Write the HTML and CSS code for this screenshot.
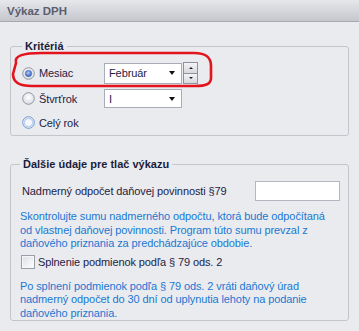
FILE: index.html
```html
<!DOCTYPE html>
<html>
<head>
<meta charset="utf-8">
<link rel="stylesheet" href="styles.css">
</head>
<body>
<div class="titlebar">Výkaz DPH</div>
<div class="content">
  <fieldset class="group g1">
    <legend>Kritériá</legend>
    <div class="row r1">
      <label class="radio"><svg width="13" height="13" viewBox="0 0 13 13"><defs><radialGradient id="rb" cx="50%" cy="40%" r="60%"><stop offset="0" stop-color="#ffffff"/><stop offset="1" stop-color="#d8dbe2"/></radialGradient><radialGradient id="dot" cx="45%" cy="40%" r="60%"><stop offset="0" stop-color="#b8d0f4"/><stop offset="1" stop-color="#2a55b8"/></radialGradient></defs><circle cx="6.5" cy="6.5" r="5.8" fill="url(#rb)" stroke="#9096a2"/><circle cx="6.5" cy="6.5" r="3.2" fill="url(#dot)" stroke="#4f6fb5" stroke-width="0.6"/></svg>Mesiac</label>
      <div class="combo"><span>Február</span><i class="arrow"></i></div>
      <div class="spin"><div class="sb"><i class="up"></i></div><div class="sb"><i class="down"></i></div></div>
    </div>
    <div class="row r2">
      <label class="radio"><svg width="13" height="13" viewBox="0 0 13 13"><circle cx="6.5" cy="6.5" r="5.8" fill="url(#rb)" stroke="#9096a2"/></svg>Štvrťrok</label>
      <div class="combo"><span>I</span><i class="arrow"></i></div>
    </div>
    <div class="row r3">
      <label class="radio"><svg width="13" height="13" viewBox="0 0 13 13"><circle cx="6.5" cy="6.5" r="5.8" fill="#f4f7fc" stroke="#6f95cf"/><circle cx="6.5" cy="6.5" r="4.2" fill="none" stroke="#b9cfee" stroke-width="1.2"/></svg>Celý rok</label>
    </div>
  </fieldset>
  <fieldset class="group g2">
    <legend>Ďalšie údaje pre tlač výkazu</legend>
    <div class="row nad">
      <span class="lbl">Nadmerný odpočet daňovej povinnosti §79</span>
      <div class="input"></div>
    </div>
    <p class="info">Skontrolujte sumu nadmerného odpočtu, ktorá bude odpočítaná od vlastnej daňovej povinnosti. Program túto sumu prevzal z daňového priznania za predchádzajúce obdobie.</p>
    <label class="check"><span class="box"></span>Splnenie podmienok podľa § 79 ods. 2</label>
    <p class="info info2">Po splnení podmienok podľa § 79 ods. 2 vráti daňový úrad nadmerný odpočet do 30 dní od uplynutia lehoty na podanie daňového priznania.</p>
  </fieldset>
</div>
<svg class="mark" width="359" height="331" viewBox="0 0 359 331"><path d="M16 63 C14 56 22 53 42 53 L194 53 C207 53 211 58 211 66 L211 78 C211 84 206 86 195 86 L32 86 C19 86 13 82 13 74 Z" fill="none" stroke="#e3141c" stroke-width="2.6" stroke-linejoin="round"/></svg>
</body>
</html>
```
FILE: styles.css
```css
html, body { margin: 0; padding: 0; }
body {
  width: 359px;
  height: 331px;
  overflow: hidden;
  background: #eaebef;
  font-family: "Liberation Sans", Arial, sans-serif;
  font-size: 11px;
  letter-spacing: -0.1px;
  color: #1e2244;
  position: relative;
}
.titlebar {
  height: 21px;
  line-height: 22px;
  padding-left: 7px;
  background: linear-gradient(#e6e7eb, #c6c7cd);
  border-bottom: 1px solid #a8aab1;
  font-weight: bold;
  font-size: 11.5px;
  letter-spacing: 0;
  color: #5a5e70;
}
.content { padding: 18px 10px 0 10px; }
.group {
  margin: 0;
  border: 1px solid #c3c5cb;
  border-radius: 3px;
  padding: 0 8px 0 9px;
  min-width: 0;
  box-sizing: border-box;
}
.group legend {
  padding: 0 3px;
  font-weight: bold;
  color: #1a1c3a;
  line-height: 13px;
  letter-spacing: 0;
}
.g1 { height: 96px; padding-left: 11px; }
.g2 { margin-top: 22px; height: 163px; padding-left: 9px; }
.row { display: flex; align-items: center; }
.r1 { margin-top: 9px; height: 22px; }
.r2 { margin-top: 5px; height: 19px; }
.r3 { margin-top: 6px; height: 17px; }
.radio { display: flex; align-items: center; width: 82px; gap: 4px; }
.radio svg { flex: none; }
.combo {
  width: 78px;
  height: 19px;
  box-sizing: border-box;
  background: #fff;
  border: 1px solid #a9adb8;
  display: flex;
  align-items: center;
  padding-left: 4px;
  position: relative;
}
.r1 .combo { height: 21px; }
.arrow {
  position: absolute;
  right: 6px;
  top: 50%;
  margin-top: -2px;
  width: 0; height: 0;
  border-left: 3.5px solid transparent;
  border-right: 3.5px solid transparent;
  border-top: 4px solid #111;
}
.spin {
  margin-left: 1px;
  width: 15px;
  height: 22px;
  display: flex;
  flex-direction: column;
}
.sb {
  flex: 1;
  border: 1px solid #8e929c;
  background: linear-gradient(#f4f4f6, #d8d9de);
  display: flex;
  align-items: center;
  justify-content: center;
}
.sb + .sb { border-top: none; }
.up, .down { width: 0; height: 0; border-left: 2px solid transparent; border-right: 2px solid transparent; }
.up { border-bottom: 2px solid #222; }
.down { border-top: 2px solid #222; }
.nad { margin-top: 10px; justify-content: space-between; height: 20px; padding-left: 2px; }
.input {
  width: 85px;
  height: 20px;
  box-sizing: border-box;
  background: #fff;
  border: 1px solid #b3b6bf;
}
.info {
  margin: 9px 0 0 0;
  width: 314px;
  color: #1a78d2;
  line-height: 13.5px;
}
.info2 { margin-top: 10px; }
.check { display: flex; align-items: center; gap: 3px; margin-top: 3px; height: 16px; padding-left: 1px; }
.box {
  width: 14px; height: 14px; box-sizing: border-box;
  border: 1px solid #9a9ea8;
  background: linear-gradient(135deg, #dcdee4, #ffffff);
  box-shadow: inset 0 0 0 1px #f7f7f9;
}
.mark { position: absolute; left: 0; top: 0; pointer-events: none; }
```
